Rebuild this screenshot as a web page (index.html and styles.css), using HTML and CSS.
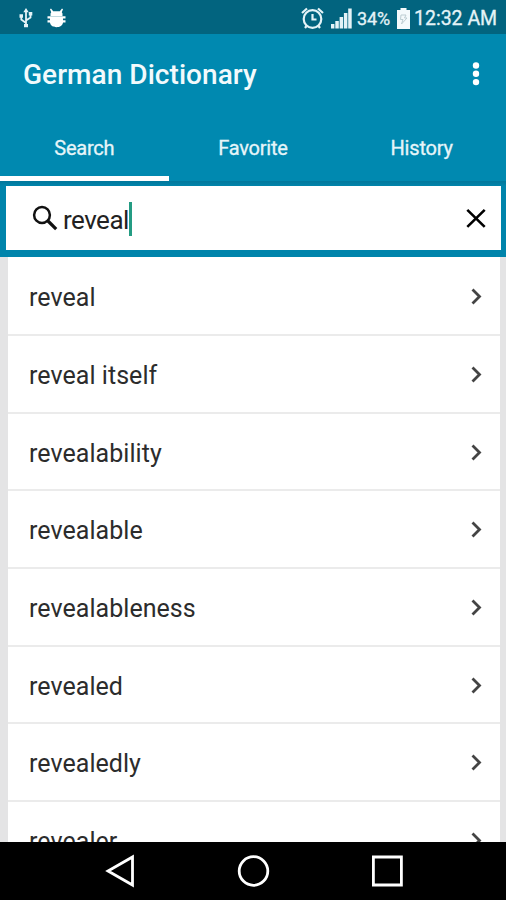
FILE: index.html
```html
<!DOCTYPE html>
<html lang="en">
<head>
<meta charset="utf-8">
<title>German Dictionary</title>
<link rel="stylesheet" href="styles.css">
</head>
<body>
<div class="screen">
  <div class="status">
    <svg class="usb" width="14" height="20" viewBox="0 0 14 20" fill="none" stroke="#e4f3f7" stroke-width="1.8"><path d="M7 3v14M7 15L2.300 11.500V8M7 12.500l4.500-3V6"/><path d="M7 0l2.700 4.200H4.300zM5 16h4v3.200H5zM.5 6.300H4v3.400H.5zM9.800 4h3.500v3.500H9.800z" fill="#e4f3f7" stroke="none"/></svg>
    <svg class="bug" width="19" height="20" viewBox="0 0 19 20" fill="#fff"><path d="M3.500 8V5.500l.7-1.300L3 1.200l1-.7 2.200 2.700h6.600L15 .5l1 .7-1.200 3 .7 1.300V8zM.5 8.300h18v2.200H.5zM3 10.500h13V15H3zM.5 12.300h18v2.200H.5zM3 14.500h13c-.3 3-3 4.700-6.500 4.700S3.300 17.500 3 14.500z"/></svg>
    <svg class="alarm" width="23" height="23" viewBox="0 0 23 23" fill="none" stroke="#e4f3f7" stroke-width="2.200"><circle cx="11.500" cy="12" r="8.800"/><path d="M11.500 7v5.500h4M1 6l5-4.500M22 6l-5-4.500M5.500 19l-1.500 2M17.500 19l1.500 2"/></svg>
    <svg class="signal" width="21" height="21" viewBox="0 0 21 21" fill="#e4f3f7"><path d="M0 16h3.400v4.500H0zM4.300 13h3.500v7.500H4.300zM8.600 9h3.500v11.500H8.600zM12.900 5h3.500v15.500h-3.500zM17.200.5h3.500v20h-3.500z"/></svg>
    <span class="percent">34%</span>
    <svg class="battery" width="13" height="21" viewBox="0 0 13 21"><path d="M3.500 0h6v2H13v19H0V2h3.500z" fill="#f4fafc"/><path d="M4 7h5L7.500 10H10L4.500 16 6 11.500H3.500z" fill="none" stroke="#bccdd2"/></svg>
    <span class="time">12:32 AM</span>
  </div>
  <header class="bar">
    <h1>German Dictionary</h1>
    <svg class="more" width="8" height="24" viewBox="0 0 8 24" fill="#fff"><circle cx="4" cy="2.500" r="3.200"/><circle cx="4" cy="10.800" r="3.200"/><circle cx="4" cy="19.100" r="3.200"/></svg>
  </header>
  <nav class="tabs">
    <span class="tab active">Search</span><span class="tab">Favorite</span><span class="tab">History</span>
  </nav>
  <div class="searchwrap">
    <div class="field">
      <svg class="lens" width="26" height="26" viewBox="0 0 26 26" fill="none" stroke="#111"><circle cx="10" cy="10" r="7.900" stroke-width="2.500"/><path d="M15.500 15.500l8.700 8.700" stroke-width="3.200"/></svg>
      <span class="query">reveal</span><span class="caret"></span>
      <svg class="clear" width="20" height="20" viewBox="0 0 20 20" stroke="#000" stroke-width="2.600"><path d="M1.300 1.900l17.400 17M18.700 1.900l-17.400 17"/></svg>
    </div>
  </div>
  <main class="list">
    <div class="row"><span>reveal</span><svg class="chev" width="12" height="18" viewBox="0 0 12 18"><path d="M1.500 1.500l7 7-7 7"/></svg></div>
    <div class="row"><span>reveal itself</span><svg class="chev" width="12" height="18" viewBox="0 0 12 18"><path d="M1.500 1.500l7 7-7 7"/></svg></div>
    <div class="row"><span>revealability</span><svg class="chev" width="12" height="18" viewBox="0 0 12 18"><path d="M1.500 1.500l7 7-7 7"/></svg></div>
    <div class="row"><span>revealable</span><svg class="chev" width="12" height="18" viewBox="0 0 12 18"><path d="M1.500 1.500l7 7-7 7"/></svg></div>
    <div class="row"><span>revealableness</span><svg class="chev" width="12" height="18" viewBox="0 0 12 18"><path d="M1.500 1.500l7 7-7 7"/></svg></div>
    <div class="row"><span>revealed</span><svg class="chev" width="12" height="18" viewBox="0 0 12 18"><path d="M1.500 1.500l7 7-7 7"/></svg></div>
    <div class="row"><span>revealedly</span><svg class="chev" width="12" height="18" viewBox="0 0 12 18"><path d="M1.500 1.500l7 7-7 7"/></svg></div>
    <div class="row"><span>revealer</span><svg class="chev" width="12" height="18" viewBox="0 0 12 18"><path d="M1.500 1.500l7 7-7 7"/></svg></div>
  </main>
  <footer class="nav">
    <svg width="34" height="34" viewBox="0 0 34 34"><path d="M30.500 3v28L6 17z"/></svg>
    <svg width="34" height="34" viewBox="0 0 34 34"><circle cx="17.500" cy="17" r="14.300"/></svg>
    <svg width="34" height="34" viewBox="0 0 34 34"><path d="M3.400 3h28v28h-28z"/></svg>
  </footer>
</div>
</body>
</html>
```
FILE: styles.css
```css
* { box-sizing: border-box; }
body { margin: 0; font-family: Roboto, "Liberation Sans", sans-serif; }
.screen { width: 506px; height: 900px; overflow: hidden; display: flex; flex-direction: column; background: #0089b0; }
svg { flex: none; display: block; }
.status { height: 34px; flex: none; background: #02647f; display: flex; align-items: center; padding: 2px 9px 0 19px; color: #e4f3f7; }
.bug { margin-left: 14px; }
.alarm { margin-left: auto; }
.signal { margin-left: 7px; }
.percent { margin-left: 5px; width: 34px; font-size: 18px; letter-spacing: -.1px; white-space: nowrap; -webkit-text-stroke: .3px; }
.battery { margin-left: 6px; }
.time { margin-left: 4px; width: 83px; font-size: 19.500px; white-space: nowrap; -webkit-text-stroke: .3px; }
.bar { height: 82px; flex: none; display: flex; align-items: center; justify-content: space-between; padding: 0 26px 0 23px; }
.more { overflow: visible; }
h1 { margin: 0; color: #f2fafc; font-size: 28px; font-weight: 500; line-height: 32px; letter-spacing: .05px; white-space: nowrap; }
.tabs { height: 65px; flex: none; display: grid; grid-template-columns: repeat(3, 1fr); }
.tab { display: flex; justify-content: center; align-items: center; color: #e6f5f9; font-size: 20px; letter-spacing: -.2px; padding-top: 4px; border-bottom: 5px solid transparent; -webkit-text-stroke: .3px; }
.tab.active { border-bottom-color: #fff; }
.searchwrap { height: 76px; flex: none; padding: 5px 5px 7px 6px; background: linear-gradient(#02779b, #0084ab 5px); }
.field { height: 64px; background: #fff; display: flex; align-items: center; padding: 0 15px 0 26px; }
.query { margin-left: 5px; padding-top: 3px; font-size: 26px; color: #222; letter-spacing: -.5px; }
.caret { width: 3px; height: 34px; margin-top: 1px; background: #249c83; }
.clear { margin-left: auto; }
.list { flex: 1; min-height: 0; overflow: hidden; background: #fff; border: solid #e4e4e5; border-width: 0 6px 0 8px; }
.row { height: 77.700px; display: flex; align-items: center; justify-content: space-between; border-bottom: 2px solid #ebebeb; padding: 3px 17px 0 21px; color: #2c2c2c; font-size: 25px; letter-spacing: .05px; }
.row:first-child { height: 79px; padding-top: 4px; }
.chev { fill: none; stroke: #444; stroke-width: 2.800; margin-bottom: 1px; }
.nav { height: 58px; flex: none; background: #000; display: flex; justify-content: center; gap: 100px; padding-top: 12px; }
.nav svg { fill: none; stroke: #fff; stroke-width: 2.800; }
```
